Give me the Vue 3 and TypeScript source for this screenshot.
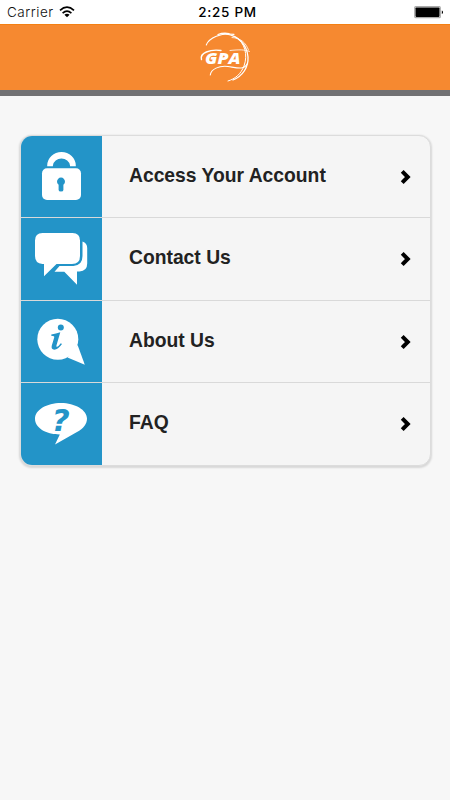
<script setup lang="ts">
type IconName = 'lock' | 'chat' | 'info' | 'faq'

interface MenuItem {
  label: string
  icon: IconName
}

const items: MenuItem[] = [
  { label: 'Access Your Account', icon: 'lock' },
  { label: 'Contact Us', icon: 'chat' },
  { label: 'About Us', icon: 'info' },
  { label: 'FAQ', icon: 'faq' },
]
</script>

<template>
  <div class="screen">
    <div class="status">
      <div class="carrier">
        <span class="carrier-name">Carrier</span>
        <svg class="wifi" width="16" height="12" viewBox="0 0 16 12">
          <path d="M1 4.3Q8 -1.9 15 4.3M3.6 7.1Q8 3.2 12.4 7.1" fill="none" stroke="#000" stroke-width="1.7" />
          <path d="M5.4 8.7Q8 6.6 10.6 8.7L8 11.3Z" />
        </svg>
      </div>
      <span class="time">2:25 PM</span>
      <svg class="battery" width="30" height="13" viewBox="0 0 30 13">
        <rect x="0.7" y="0.7" width="25.6" height="11" rx="1" fill="#fff" stroke="#aaa" stroke-width="1.2" />
        <rect x="1.5" y="1.5" width="24" height="9.4" rx="0.8" />
        <path d="M27.8 4.5Q29 4.8 29 6.3T27.8 8.1Z" />
      </svg>
    </div>

    <header class="header">
      <svg class="logo" width="70" height="60" viewBox="0 0 70 60">
        <g fill="none" stroke="#fff" stroke-linecap="round">
          <path d="M16.3 17C19 10 31 4.5 44 6.4" stroke-width="1.1" />
          <path d="M28 6.5Q33 4.6 39 5.6" stroke-width="1.3" />
          <path d="M36 5.8C49 8 57 17 58 29C58.5 39 53 48 43 52" stroke-width="1.3" />
          <path d="M46 9C55 15 58 27 54 38C51 46 45 51 38 53" stroke-width="1" />
          <path d="M42 9.5C51 10 56 15 58.5 22" stroke-width="0.8" />
          <path d="M11.5 31.5C9.5 25 20 21 31 22.5" stroke-width="1.4" />
          <path d="M40 22.5C49 21.5 55 21.5 59.5 23.5" stroke-width="0.8" />
          <path d="M20.3 47C21 41 29 37.5 38 38.5C48 40 54 42 57 36" stroke-width="1.1" />
        </g>
        <text class="brand" x="15" y="36.2" textLength="35.5" lengthAdjust="spacingAndGlyphs">GPA</text>
      </svg>
    </header>

    <nav class="menu">
      <a v-for="item in items" :key="item.icon" class="row">
        <span class="tile">
          <svg v-if="item.icon === 'lock'" class="icon" viewBox="21 136 81 82">
            <path d="M47.2 166.3V165.5A14.2 13.5 0 0 1 75.8 165.5V166.3H70V165.5A8.6 7.8 0 0 0 52.9 165.5V166.3Z" />
            <rect x="42" y="168.3" width="39" height="31.7" rx="5" />
            <path class="cut" d="M58.6 184.8A4 4 0 1 1 63.4 184.8V190Q63.4 191.6 61 191.6T58.6 190Z" />
          </svg>
          <svg v-else-if="item.icon === 'chat'" class="icon" viewBox="21 218 81 82">
            <path d="M42.5 233H72.5Q80 233 80 240.5V256Q80 264 72 264H56.5L44 276.2V264H42.5Q35 263.5 35 256V240.5Q35 233 42.5 233Z" />
            <path d="M82.5 241.5Q87.2 243.3 87.2 248V263.5Q87.2 271 79.5 271.5H77V284.8L64.3 271.7H54.5L59.5 266H73.5Q82.5 265.3 82.5 256Z" />
          </svg>
          <svg v-else-if="item.icon === 'info'" class="icon" viewBox="21 301 81 82">
            <circle cx="57.8" cy="339.2" r="20.5" />
            <path d="M77.6 345L84.8 364.8L67.5 357.5Z" />
            <circle class="cut" cx="60.8" cy="327.6" r="3" />
            <path class="cut" d="M51.3 334.6Q56 333.6 60.3 332.2L56.5 345.2Q55.9 347.2 57.2 346.8Q58.7 346 60.8 343.2L62 344.1Q58 349.8 54.3 349.8Q50.8 349.6 51.8 345.6L54.2 337.6Q54.8 335.7 51.2 335.8Z" />
          </svg>
          <svg v-else class="icon" viewBox="21 383 81 82">
            <path d="M61 403C75 403 87 410 87 418.5C87 424 83.5 428.5 77 432L55 444.6L59.8 434.5C45.5 434.5 35 427.6 35 418.8C35 410 46.5 403 61 403Z" />
            <text class="glyph-q" x="51.8" y="431">?</text>
          </svg>
        </span>
        <span class="label">{{ item.label }}</span>
        <svg class="chevron" width="12" height="16" viewBox="0 0 12 16">
          <path d="M2.2 2.4L7.8 8L2.2 13.6" fill="none" stroke="#000" stroke-width="4" />
        </svg>
      </a>
    </nav>
  </div>
</template>

<style>
body {
  background: #f7f7f7;
}
</style>

<style scoped>
.screen {
  box-sizing: border-box;
  width: 450px;
  height: 800px;
  background: #f7f7f7;
  font-family: "Liberation Sans", sans-serif;
  overflow: hidden;
}
.status {
  display: grid;
  grid-template-columns: 1fr auto 1fr;
  align-items: center;
  box-sizing: border-box;
  height: 24px;
  padding: 0 6px 0 7px;
  background: #fff;
  color: #000;
  font-family: Inter, sans-serif;
}
.carrier {
  display: flex;
  align-items: center;
  gap: 5px;
}
.carrier-name {
  font-size: 13.5px;
  font-weight: 300;
  line-height: 24px;
  letter-spacing: 0.5px;
  color: #111;
}
.time {
  padding-left: 4px;
  font-size: 13.5px;
  font-weight: 500;
  line-height: 24px;
  letter-spacing: 0.7px;
}
.battery {
  justify-self: end;
}
.header {
  display: flex;
  justify-content: center;
  align-items: center;
  box-sizing: border-box;
  height: 72px;
  background: #f68930;
  border-bottom: 6px solid #717173;
  border-top: 1px solid #f48012;
}
.logo {
  display: block;
}
.brand {
  font: italic 800 16.5px "Open Sans", sans-serif;
  fill: #fff;
}
.menu {
  box-sizing: border-box;
  width: 411px;
  height: 331px;
  margin: 39px 0 0 20px;
  border: 1px solid #dcdcdc;
  border-radius: 12px;
  background: #f5f5f5;
  box-shadow: 0 1px 2px 1px rgba(0, 0, 0, 0.13);
  overflow: hidden;
  display: grid;
  grid-template-rows: 82px 83px 82px 82px;
}
.row {
  display: flex;
  align-items: center;
  min-height: 0;
  border-bottom: 1px solid #d9d9d9;
}
.row:last-child {
  border-bottom: 0;
}
.tile {
  width: 81px;
  height: 100%;
  background: #2394c8;
}
.icon {
  display: block;
  width: 81px;
  height: 82px;
  fill: #fff;
}
.cut {
  fill: #2394c8;
}
.glyph-q {
  font: italic 700 31px "DejaVu Sans", sans-serif;
  fill: #2394c8;
}
.label {
  flex: 1;
  padding: 0 0 2px 27px;
  color: #222;
  font-size: 19.3px;
  font-weight: 700;
  line-height: 24px;
}
.chevron {
  margin-right: 18px;
}
</style>
